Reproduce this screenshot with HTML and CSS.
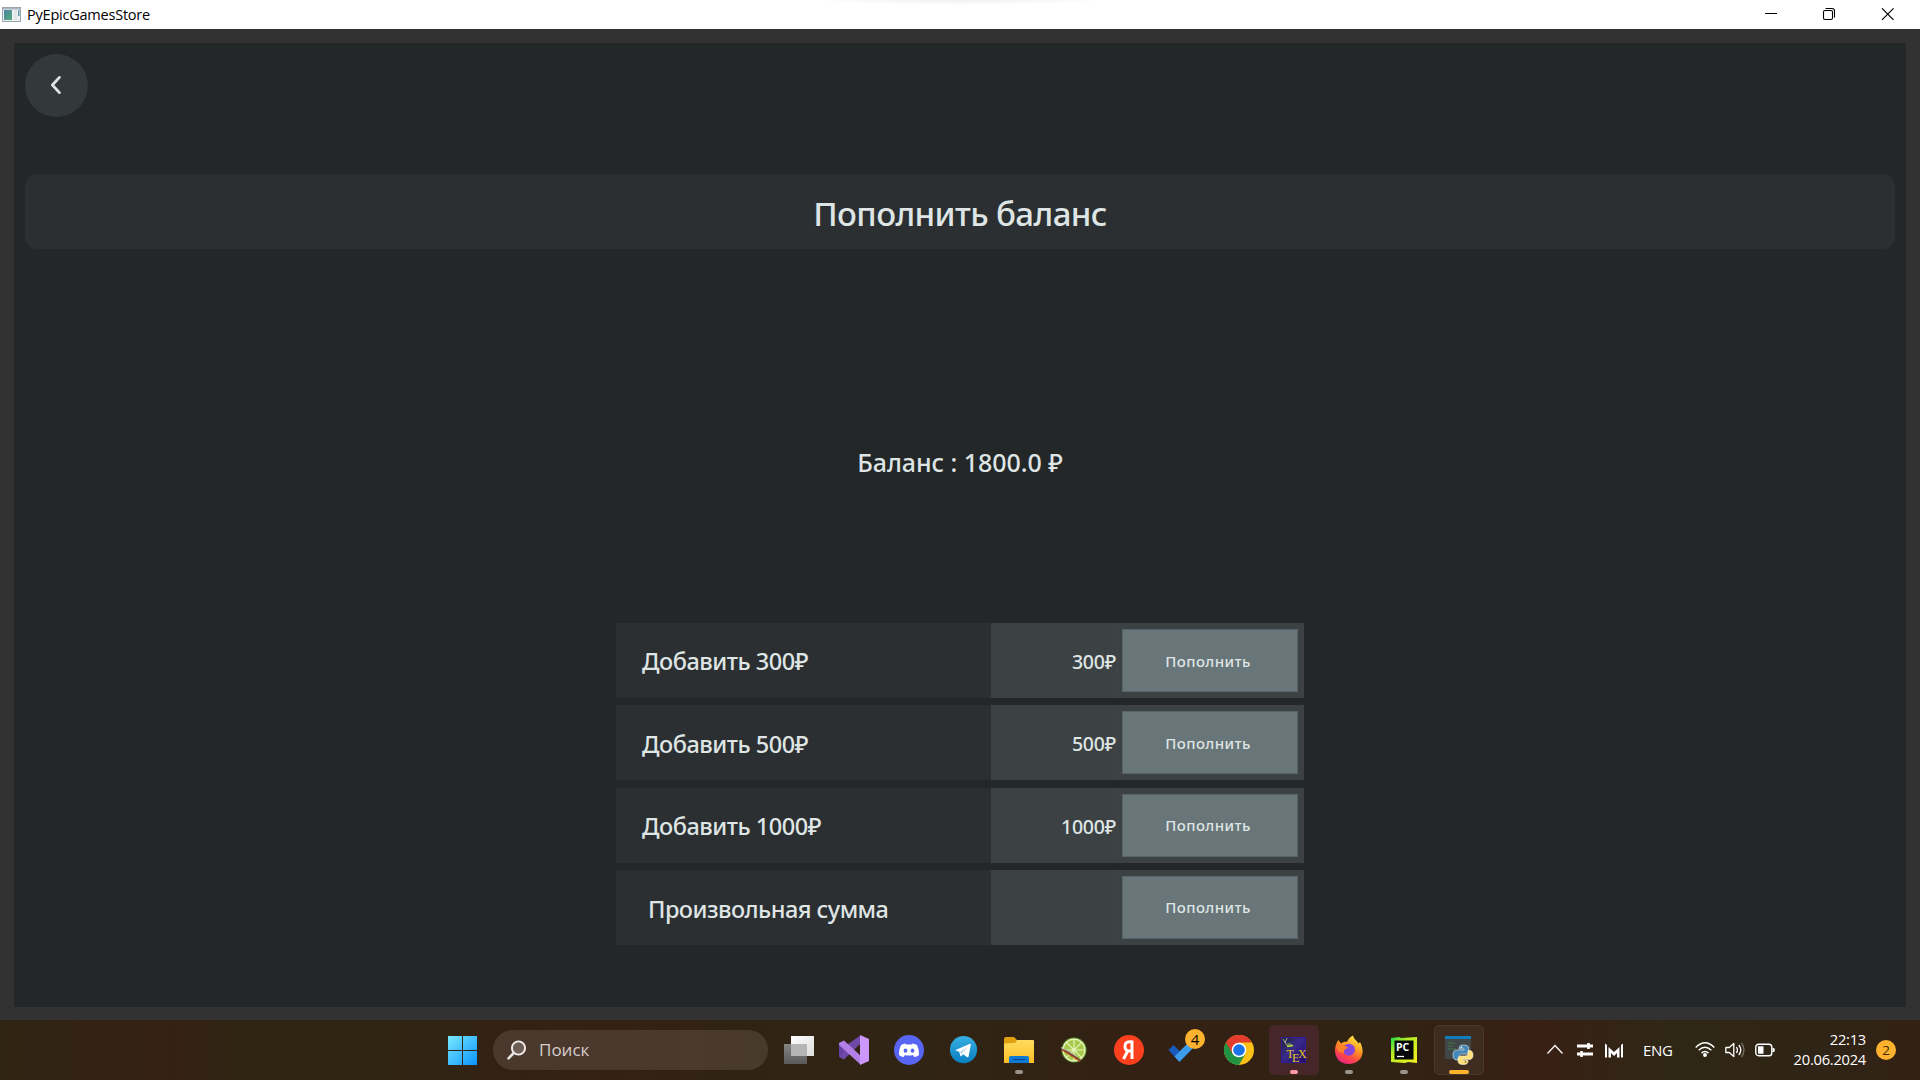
FILE: index.html
```
<!DOCTYPE html>
<html lang="ru">
<head>
<meta charset="utf-8">
<title>PyEpicGamesStore</title>
<link rel="stylesheet" href="styles.css">
</head>
<body>
<header class="titlebar">
  <svg class="app-icon" width="19" height="16" viewBox="0 0 19 16">
    <rect x=".5" y=".5" width="18" height="14" fill="#eef1f2" stroke="#9aa3ab"/>
    <path d="M1 1h17v1.500H1z" fill="#aab4c0"/>
    <path d="M2 3h8v10H2z" fill="url(#appg)"/>
    <path d="M12 3h3v10h-3z" fill="#e2e6e8"/><path d="M16 3h1.500v6H16z" fill="#5c9aa8"/>
    <defs><linearGradient id="appg" x2="1" y2="1"><stop stop-color="#4c83a5"/><stop offset="1" stop-color="#55ac79"/></linearGradient></defs>
  </svg>
  <span class="titlebar-text">PyEpicGamesStore</span>
  <div class="window-buttons">
    <svg width="58" height="29" viewBox="0 0 58 29"><path d="M23 13.500h12" stroke="#000"/></svg>
    <svg width="58" height="29" viewBox="0 0 58 29" fill="none" stroke="#000" stroke-width="1.100"><rect x="23.500" y="10.500" width="9" height="9" rx="1.500"/><path d="M25.500 8.500h6.500q2.500 0 2.500 2.500v6.500"/></svg>
    <svg width="59" height="29" viewBox="0 0 59 29"><path d="M24 8.300l11.500 11.500M35.500 8.300L24 19.800" stroke="#000" stroke-width="1.200"/></svg>
  </div>
</header>
<main class="window">
  <section class="panel">
    <button class="back" aria-label="Назад"><svg width="12" height="20" viewBox="0 0 12 20"><path d="M9.400 2.400L2.400 10l7 7.600" fill="none" stroke="#dfe3e4" stroke-width="2.800" stroke-linecap="round" stroke-linejoin="round"/></svg></button>
    <h1 class="heading"><span>Пополнить баланс</span></h1>
    <p class="balance">Баланс : 1800.0 ₽</p>
    <div class="offers">
      <div class="offer"><span class="offer-name">Добавить 300₽</span><span class="offer-price">300₽</span><div class="offer-action"><button class="pay">Пополнить</button></div></div>
      <div class="offer"><span class="offer-name low">Добавить 500₽</span><span class="offer-price">500₽</span><div class="offer-action"><button class="pay">Пополнить</button></div></div>
      <div class="offer"><span class="offer-name">Добавить 1000₽</span><span class="offer-price">1000₽</span><div class="offer-action"><button class="pay">Пополнить</button></div></div>
      <div class="offer"><span class="offer-name low custom">Произвольная сумма</span><span class="offer-price"></span><div class="offer-action"><button class="pay">Пополнить</button></div></div>
    </div>
  </section>
</main>
<footer class="taskbar">
  <div class="task"><svg width="30" height="30" viewBox="0 0 30 30"><defs><linearGradient id="win" gradientUnits="userSpaceOnUse" x1="0" y1="0" x2="30" y2="30"><stop stop-color="#7cecff"/><stop offset="1" stop-color="#0a94fa"/></linearGradient></defs><path d="M1 1h14v14H1zM16 1h14v14H16zM1 16h14v14H1zM16 16h14v14H16z" fill="url(#win)"/></svg></div>
  <div class="search"><svg width="20" height="20" viewBox="0 0 20 20"><circle cx="11.500" cy="8" r="6.600" fill="#6d5e56" stroke="#f2efed" stroke-width="1.900"/><path d="M6.700 13L1.500 18.300" stroke="#e9e5e2" stroke-width="2.600" stroke-linecap="round"/></svg><span>Поиск</span></div>
  <nav class="apps">
    <div class="task"><svg width="30" height="30" viewBox="0 0 30 30"><defs><linearGradient id="tv" x2="1" y2="1"><stop stop-color="#fff"/><stop offset="1" stop-color="#dcdcdc"/></linearGradient><linearGradient id="tv2" x2="0" y2="1"><stop stop-color="#858585"/><stop offset="1" stop-color="#5a5a5a"/></linearGradient></defs><path d="M0 9h23v20H0z" fill="url(#tv2)"/><path d="M7 1h23v20H7z" fill="url(#tv)"/><path d="M7 9h16v12H7z" fill="#b5b5b5"/></svg></div>
    <div class="task"><svg width="30" height="30" viewBox="0 0 30 30"><path d="M0 22l5 2.500L22 8V0L5 12z" fill="#7048a8"/><path d="M0 8v14l4-5v-5z" fill="#6540a0"/><path d="M0 8l5-2.500L22 21v9L0 10z" fill="#b27fe6"/><path d="M21 0l9 4v22l-9 4z" fill="#cc96fa"/></svg></div>
    <div class="task"><svg width="30" height="30" viewBox="0 0 30 30"><circle cx="15" cy="15" r="15" fill="#5865f2"/><path d="M11.500 8.500Q8.500 9 7 10q-2.400 5-2 10 2.300 1.800 4.800 2l1.100-1.900q4.100 1 8.200 0l1.100 1.900q2.600-.2 4.800-2 .4-5-2-10-1.500-1-4.500-1.500l-.6 1.100q-2.900-.4-5.800 0z" fill="#fff"/><ellipse cx="11.500" cy="15.700" rx="1.900" ry="2.100" fill="#5865f2"/><ellipse cx="18.500" cy="15.700" rx="1.900" ry="2.100" fill="#5865f2"/></svg></div>
    <div class="task"><svg width="28" height="28" viewBox="0 0 28 28"><defs><linearGradient id="tg" x2="0" y2="1"><stop stop-color="#37aee2"/><stop offset="1" stop-color="#087fc0"/></linearGradient></defs><circle cx="13.500" cy="13.700" r="13.600" fill="url(#tg)"/><path d="M5.500 14L20 7.700q1-.1.800 1l-2.300 12q-.4 1-1.300.5l-4-3-2 2q-.8.500-1-.7l-1-3.700-3.400-1.200q-.8-.3-.3-.6z" fill="#fff"/><path d="M10.300 16l7.500-5.200-6 6.500-.3 2.200z" fill="#a9cfe4"/></svg></div>
    <div class="task"><svg width="30" height="30" viewBox="0 0 30 30"><defs><linearGradient id="fd" x2="0" y2="1"><stop stop-color="#ffdc60"/><stop offset="1" stop-color="#fdbd22"/></linearGradient></defs><path d="M0 4q0-2 2-2h8l3 3h5v8H0z" fill="#e0a010"/><path d="M0 8.500L11 8l2-3h16q1 0 1 1v22H0z" fill="url(#fd)"/><path d="M5 28v-5q0-2 2-2h16q2 0 2 2v5z" fill="#0c78d2"/><path d="M9 24.500h12" stroke="#07468c"/></svg><i class="dot"></i></div>
    <div class="task"><svg width="28" height="28" viewBox="0 0 28 28"><circle cx="14" cy="14" r="12.500" fill="#5f9d28"/><circle cx="14" cy="14" r="11.500" fill="#eff5c5"/><circle cx="14" cy="14" r="10.300" fill="#a6cb4c"/><path d="M14 3v22M3 14h22M6.200 6.200l15.600 15.600M21.800 6.200L6.200 21.800" stroke="#eaf3bd" stroke-width="1.200"/><path d="M0 12.500l7 1.500 15 10.500-1 1L5 16z" fill="#72452c"/><path d="M2 14l18 11.500" stroke="#d34b25"/><path d="M1 11.500l6 3 10 6" stroke="#c9c9c2"/></svg></div>
    <div class="task"><svg width="30" height="30" viewBox="0 0 30 30"><circle cx="15" cy="15" r="15" fill="#fc3f1d"/><path d="M18 5.500V24M18 6.800h-2.500q-4.500 0-4.500 4.600 0 4.500 4.500 4.500H18M14 15.500L9.500 24" fill="none" stroke="#fff" stroke-width="3"/></svg></div>
    <div class="task"><svg width="34" height="30" viewBox="0 0 34 30"><path d="M1.500 15l5-5 10 10-4.500 6.500z" fill="#195abd"/><path d="M7.500 21.500L22 7l5 5L12.500 27z" fill="#3c9bea"/></svg><b class="count">4</b></div>
    <div class="task"><svg width="30" height="30" viewBox="0 0 30 30"><circle cx="15" cy="15" r="15" fill="#fbc116"/><path d="M15 15L2 7.500A15 15 0 0 0 15 30l6.500-11.200z" fill="#229342"/><path d="M2 7.500A15 15 0 0 1 28 7.500H15L8.500 18.700z" fill="#e33b2e"/><circle cx="15" cy="15" r="7.300" fill="#fff"/><circle cx="15" cy="15" r="5.800" fill="#1a73e8"/></svg></div>
    <div class="task tinted"><svg width="28" height="28" viewBox="0 0 28 28"><defs><linearGradient id="tx" x2="1" y2="1"><stop stop-color="#20242e"/><stop offset=".45" stop-color="#382a8c"/><stop offset="1" stop-color="#230a62"/></linearGradient></defs><path d="M1.500 1.500h24v25h-24z" fill="url(#tx)" stroke="#301b98"/><path d="M3 3l3 5M7 2l-2 5" stroke="#a0a69c" fill="none"/><path d="M5 8l5-1 4 3-6 1z" fill="#6c7964"/><path d="M7 10.500l6-1" stroke="#b0d831" stroke-width="1.500"/><g font-family="Liberation Serif,serif" font-size="12" fill="#e7c818"><text x="6.500" y="22">T</text><text x="12" y="25.500">E</text><text x="18" y="22">X</text></g></svg><i class="dot pink"></i></div>
    <div class="task"><svg width="30" height="30" viewBox="0 0 30 30"><defs><linearGradient id="ff" x1=".8" y1="0" x2=".3" y2="1"><stop stop-color="#fff04a"/><stop offset=".42" stop-color="#ff9b21"/><stop offset=".72" stop-color="#ff4a43"/><stop offset="1" stop-color="#e92386"/></linearGradient></defs><path d="M19 .5c1 4 4 5 5.500 8l1.500-1.500c7 13-1 22-11 22C5 29 1 22 1 15c0-4 1.500-7 3.200-10L7 8.500c2-1.500 4-2 6-1.500 1-3 3-5 6-6.500z" fill="url(#ff)"/><circle cx="15" cy="14.800" r="6" fill="#8645db"/><path d="M2 11c4-2 8-1 12 1.500l-2 1.500c-2 .5-3 2.500-1.700 4L5 17z" fill="#ff812a"/></svg><i class="dot"></i></div>
    <div class="task"><svg width="26" height="26" viewBox="0 0 26 26"><defs><linearGradient id="pc" x2="1" y2="1"><stop stop-color="#16db48"/><stop offset=".35" stop-color="#b8ed24"/><stop offset="1" stop-color="#f5ee20"/></linearGradient></defs><path d="M0 1l8-1 2 1 16-1v26l-9-1-3 1-14-1z" fill="url(#pc)"/><path d="M3.500 3.500h19v19h-19z" fill="#050806"/><text x="5" y="13.500" font-family="Open Sans" font-weight="700" font-size="10.500" fill="#fff">PC</text><path d="M6 19.500h7" stroke="#fff" stroke-width="1.300"/></svg><i class="dot"></i></div>
    <div class="task active"><svg width="30" height="30" viewBox="0 0 30 30"><path d="M1 1h26v23H1z" fill="#414748"/><path d="M1 1h26v3H1z" fill="#117dbc"/><path d="M4 8h7M4 11h5M4 14h8" stroke="#3f7948" stroke-width="1.200"/><path d="M19.500 10c-4 0-4.500 1.500-4.500 4h5v1h-7c-3 0-4 2-4 5s1 5 4 5h2v-3c0-2 1-3 3-3h4c2 0 2.800-1 2.800-2.500V13.500c0-2.500-1.800-3.500-5.300-3.500z" fill="#4388b8" stroke="#e8eef0" stroke-width=".6"/><path d="M19 29.500c4.500 0 5-1.500 5-4h-5v-1h6c3 0 4-2 4-4.500s-1-4.500-3.500-4.500H24v2.500c0 2-1 3-3 3h-4c-2 0-3 1-3 2.500V26c0 2.500 1.500 3.500 5 3.500z" fill="#ffe17c" stroke="#f6f0dc" stroke-width=".6"/><circle cx="17.500" cy="12.300" r=".9" fill="#fff"/><circle cx="21.500" cy="27" r=".9" fill="#a07a20"/></svg><i class="dot wide"></i></div>
  </nav>
  <div class="tray">
    <svg class="chev" width="16" height="20" viewBox="0 0 16 20"><path d="M.5 13.500L8 5.500l7.500 8" fill="none" stroke="#fff" stroke-width="1.200"/></svg>
    <svg class="sliders" width="18" height="20" viewBox="0 0 18 20"><path d="M1 6h16M1 14h16" stroke="#fff" stroke-width="2.800"/><path d="M12.500 3v6M5.500 11v6" stroke="#fff" stroke-width="2.600"/></svg>
    <svg class="mm" width="18" height="20" viewBox="0 0 18 20"><path d="M0 3.500l2 1.500v12.500H0zM18 3.500L16 5v12.500h2zM3.500 7L9 12l5.500-5v10.500H12V13l-3 3-3-3v4.500H3.500z" fill="#fff"/></svg>
    <span class="lang">ENG</span>
    <svg class="wifi" width="20" height="20" viewBox="0 0 20 20" fill="none" stroke="#fff" stroke-width="1.500"><path d="M.7 7.500Q10-2.100 19.300 7.500M3.700 10.300q6.300-6 12.600 0M6.500 13.100q3.500-3.200 7 0"/><circle cx="10" cy="15" r="1.200" fill="#fff"/></svg>
    <svg class="vol" width="20" height="20" viewBox="0 0 20 20" fill="none" stroke="#fff" stroke-width="1.300"><path d="M.8 7.500h3.500L8.800 3.500v13l-4.500-4H.8z" stroke-linejoin="round"/><path d="M11.500 7q2 3 0 6M13.800 5q4 5 0 10"/><path d="M16.500 3q5 7 0 14" stroke="#77705f"/></svg>
    <svg class="bat" width="20" height="20" viewBox="0 0 20 20"><rect x=".8" y="4.200" width="16" height="11.500" rx="2.800" fill="none" stroke="#fff" stroke-width="1.400"/><path d="M3 6.300h5.500v7.400H3zM17.500 8h1.300q1 0 1 2t-1 2h-1.300z" fill="#fff"/></svg>
    <div class="clock"><span>22:13</span><span>20.06.2024</span></div>
    <b class="notes">2</b>
  </div>
</footer>
</body>
</html>
```
FILE: styles.css
```
* { box-sizing: border-box; }
body { margin: 0; width: 1920px; height: 1080px; overflow: hidden; display: flex; flex-direction: column; font-family: "Noto Sans", "Open Sans", sans-serif; color: #dfe5e4; background: #323232; }
svg { display: block; flex: none; }
button { border: 0; padding: 0; margin: 0; color: inherit; font: inherit; }

.titlebar { height: 29px; flex: none; display: flex; align-items: center; padding: 0 3px 0 2px; background: radial-gradient(ellipse 150px 5px at 960px 0, #f0f0f0, #fff) #fff; color: #000; }
.titlebar-text { margin: 0 0 0 6px; font: 14.500px/20px "Open Sans", sans-serif; letter-spacing: -.22px; }
.window-buttons { display: flex; margin-left: auto; }

.window { height: 991px; flex: none; padding: 14px 14px 13px; background: #323232; }
.panel { height: 964px; padding: 11px; background: #232728; display: flex; flex-direction: column; }
.back { width: 63px; height: 63px; padding: 0 1px 1px 0; border-radius: 50%; background: #33383b; display: flex; align-items: center; justify-content: center; }
.heading { margin: 57px 0 0; height: 75px; padding-top: 4px; border-radius: 12px; background: #2b2f32; display: flex; align-items: center; justify-content: center; font-size: 33px; font-weight: 550; line-height: 1; letter-spacing: -.6px; }
.balance { margin: 196px 0 0; height: 34px; line-height: 34px; text-align: center; font-size: 25px; font-weight: 500; letter-spacing: -.05px; }
.offers { margin: 144px auto 0; width: 688px; display: grid; grid-auto-rows: 75px; row-gap: 7.330px; }
.offer { display: grid; grid-template-columns: 375px 126px 187px; height: 75px; align-items: stretch; background: #3c4144; }
.offer-name { padding: 1px 0 0 26px; line-height: 74px; background: #2b2f32; font-size: 23.500px; font-weight: 500; letter-spacing: -.47px; white-space: nowrap; }
.offer-name.low { padding-top: 3px; line-height: 72px; }
.offer-name.custom { padding-left: 32px; letter-spacing: -.53px; }
.offer-price { padding: 2px 1px 0 0; text-align: right; line-height: 73px; font-size: 19.500px; font-weight: 500; letter-spacing: -.2px; }
.offer-action { padding: 6px 6px 6px 4px; border-left: 1px solid #404548; }
.pay { display: block; width: 100%; height: 63px; padding-right: 4px; border: 1px solid #566367; background: #687579; font-size: 15px; font-weight: 500; letter-spacing: .4px; }

.taskbar { height: 60px; flex: none; display: flex; align-items: center; padding-left: 437px; background: linear-gradient(90deg, #302413 0, #332314 5%, #352114 9%, #302413 12%, #302413 20%, #352114 32%, #302313 38%, #302414 48%, #332114 62%, #302313 72%, #392014 80%, #2f2716 87%, #2f2516 94%, #322114 100%); }
.task { position: relative; width: 50px; height: 50px; flex: none; border-radius: 5px; display: flex; align-items: center; justify-content: center; }
.tinted { background: #462628; }
.active { background: #3f2c20; border: 1px solid #48372b; }
.dot { position: absolute; bottom: 1px; left: 21px; width: 8px; height: 4px; border-radius: 2px; background: #9b948d; }
.dot.pink { background: #ff99a4; }
.dot.wide { bottom: 0; left: 14px; width: 20px; background: #ffb22e; }
.count { position: absolute; left: 26px; top: 4px; width: 20px; height: 20px; border-radius: 50%; background: #ffb22e; color: #000; font: 15px/20px "Open Sans", sans-serif; text-align: center; }
.search { width: 275px; height: 40px; flex: none; margin: 0 6px; padding-left: 14px; border-radius: 20px; background: linear-gradient(90deg, #4b382d, #4c392e 60%, #483a2b); display: flex; align-items: center; gap: 12px; color: #d5ceca; font: 17px/24px "Open Sans", sans-serif; }
.apps { display: flex; gap: 5px; }
.tray { display: flex; align-items: center; margin-left: 63px; color: #fff; font-family: "Open Sans", sans-serif; }
.sliders { margin-left: 13px; }
.mm { margin-left: 11px; }
.lang { width: 29px; margin: 0 0 0 20px; font-size: 15px; letter-spacing: -.3px; }
.wifi { margin-left: 23px; }
.vol { margin-left: 10px; }
.bat { margin-left: 10px; }
.clock { width: 81px; margin: -2px 0 0 10px; display: flex; flex-direction: column; align-items: flex-end; font-size: 14.700px; line-height: 20px; letter-spacing: -.25px; }
.notes { width: 20px; height: 20px; margin-left: 10px; border-radius: 50%; background: #ffb22e; color: #3a2800; font: 13.500px/20px "Open Sans", sans-serif; text-align: center; }
```
